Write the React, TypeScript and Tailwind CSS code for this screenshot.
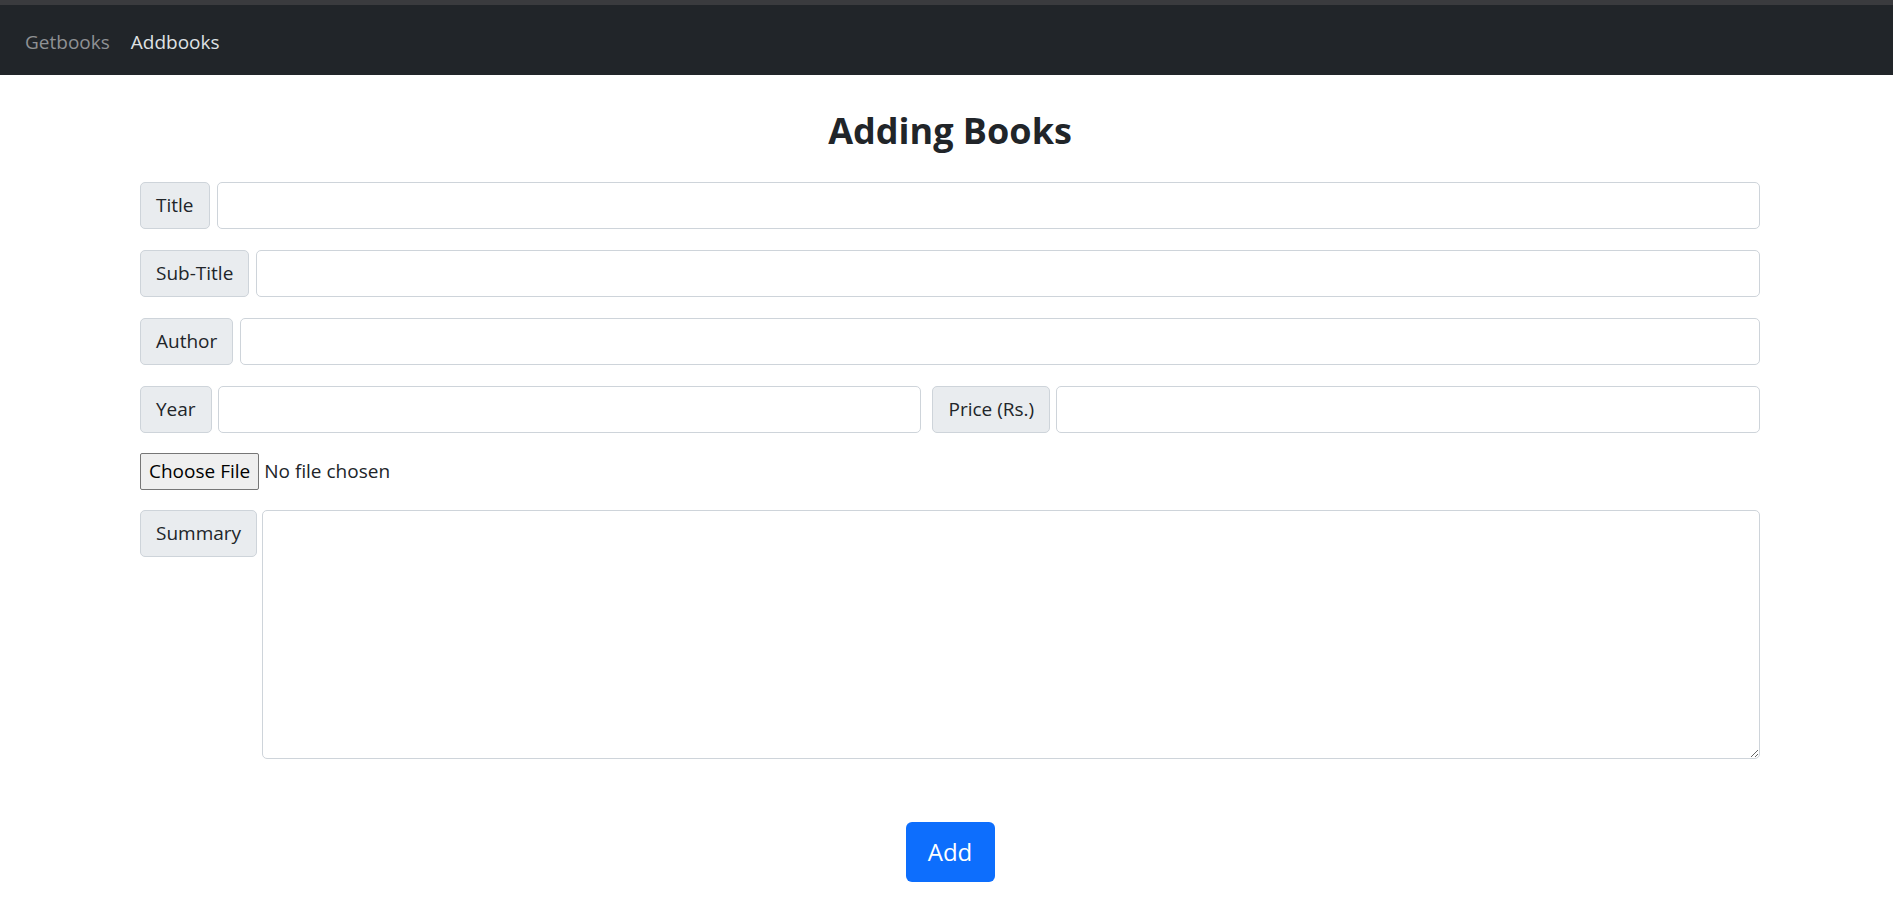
import React from 'react';

const FONT = '"Open Sans", "Noto Sans", "Liberation Sans", sans-serif';

function Label({ children }: { children: React.ReactNode }) {
  return (
    <span className="shrink-0 h-[47px] flex items-center px-[15px] bg-[#e9ecef] border border-[#ced4da] rounded-[5px] text-[19px] text-[#212529]">
      {children}
    </span>
  );
}

function Input() {
  return <input type="text" className="w-full min-w-0 h-[47px] border border-[#ced4da] rounded-[5px] bg-white outline-none px-3" />;
}

function Field({ label }: { label: string }) {
  return (
    <div className="flex items-center gap-[7px]">
      <Label>{label}</Label>
      <Input />
    </div>
  );
}

export default function App() {
  return (
    <div className="min-h-screen bg-white text-[#212529]" style={{ fontFamily: FONT }}>
      <nav className="h-[75px] bg-[#212529] border-t-[5px] border-[#3a3b3e] flex items-center pt-[4px] px-[25px] gap-[21px] text-[19px]">
        <a className="text-[#8f9194]">Getbooks</a>
        <a className="text-[#dfe1e4]">Addbooks</a>
      </nav>

      <div className="ml-[140px] w-[1620px]">
        <h1 className="text-center text-[36px] font-bold leading-none pt-[38px] pb-[33px]">Adding Books</h1>

        <div className="flex flex-col gap-[21px]">
          <Field label="Title" />
          <Field label="Sub-Title" />
          <Field label="Author" />
          <div className="grid grid-cols-[auto_1fr_auto_1fr] items-center">
            <Label>Year</Label>
            <div className="ml-[6px]"><Input /></div>
            <div className="ml-[11px]"><Label>Price (Rs.)</Label></div>
            <div className="ml-[6px]"><Input /></div>
          </div>

          <div className="flex items-center h-[37px] -my-px text-[19px]">
            <button className="h-[37px] px-[8px] bg-[#efefef] border border-[#767676] rounded-[2px] text-[19px] text-black">Choose File</button>
            <span className="ml-[5px]">No file chosen</span>
          </div>

          <div className="flex items-start gap-[5px]">
            <Label>Summary</Label>
            <textarea className="flex-1 h-[249px] border border-[#ced4da] rounded-[5px] bg-white outline-none p-2" />
          </div>
        </div>

        <div className="flex justify-center pt-[63px]">
          <button className="h-[60px] w-[89px] bg-[#0d6efd] text-white text-[24px] rounded-[6px]">Add</button>
        </div>
      </div>
    </div>
  );
}
